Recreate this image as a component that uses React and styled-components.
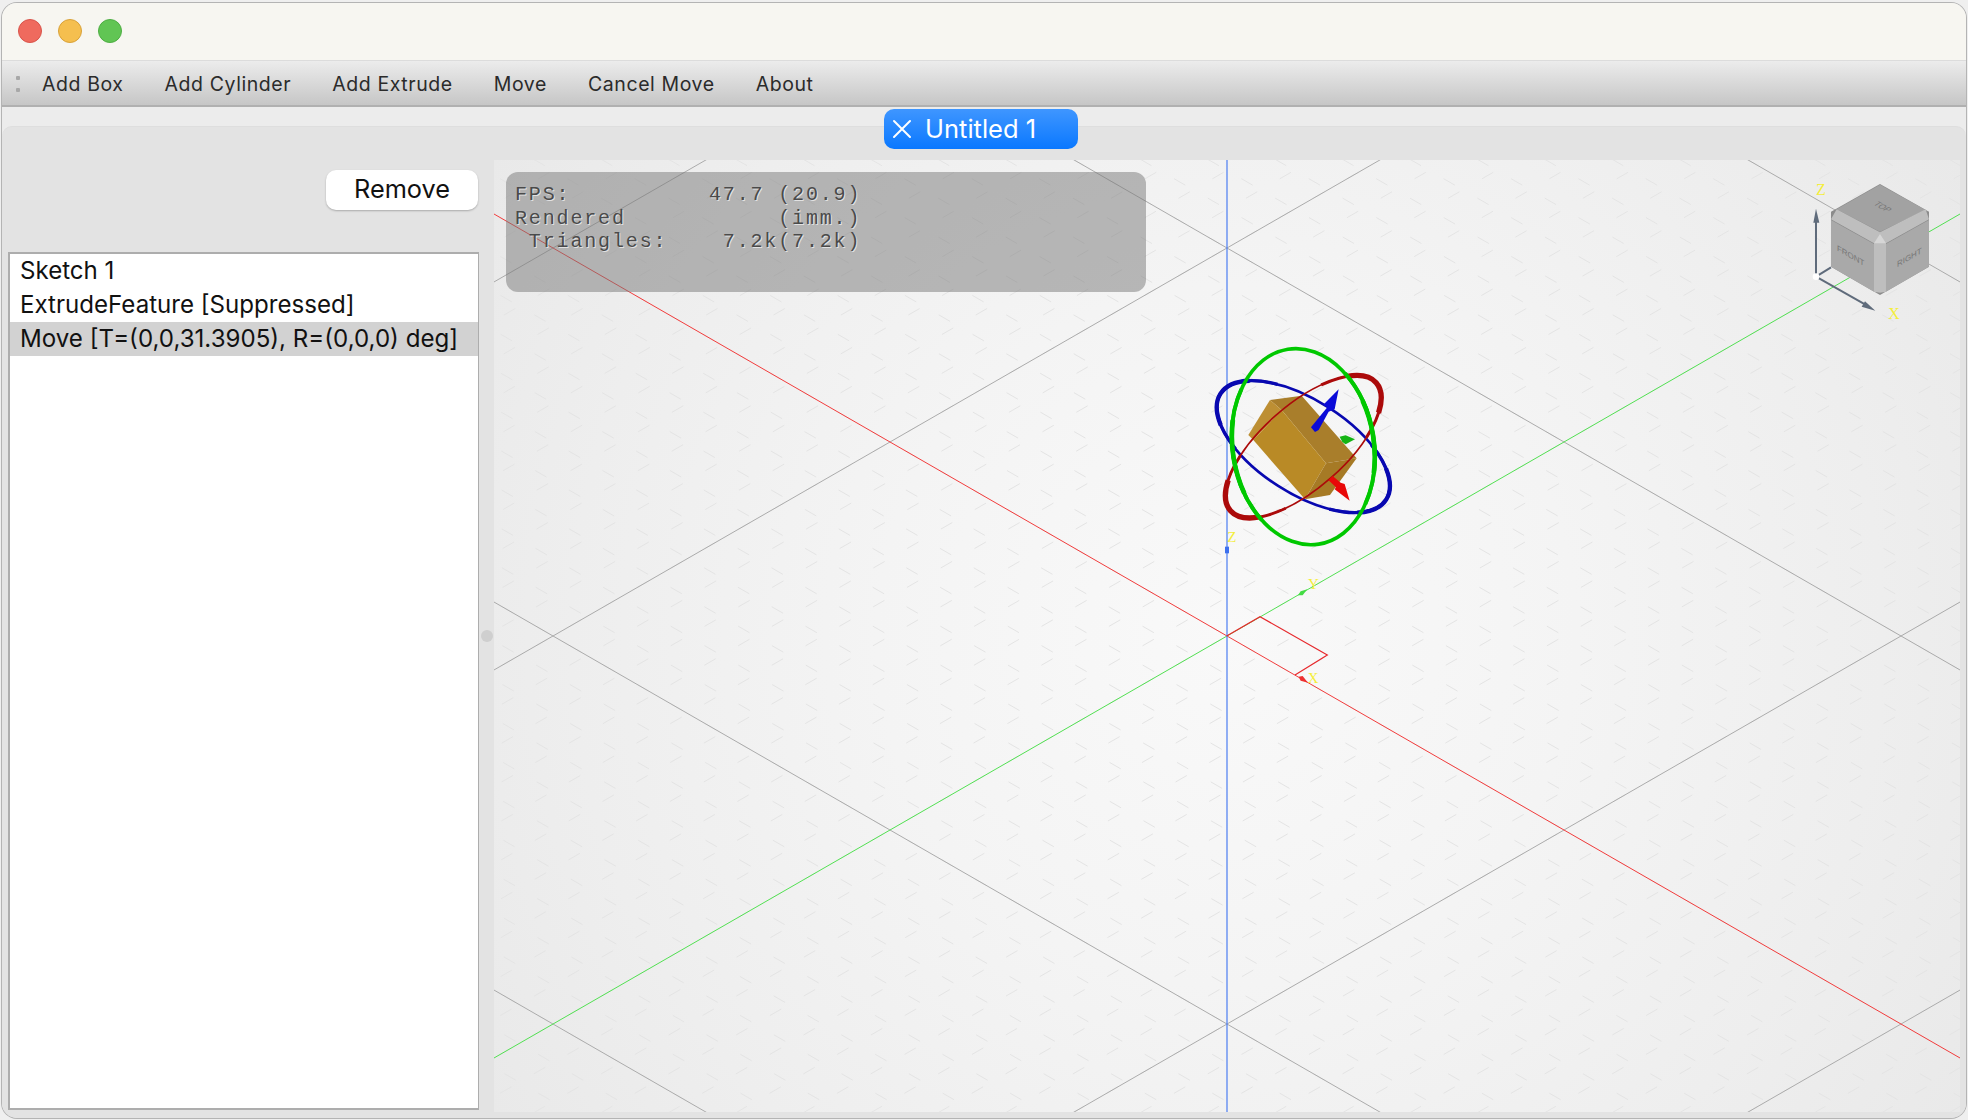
import React from 'react';
import styled, { createGlobalStyle } from 'styled-components';

const GlobalStyle = createGlobalStyle`
  body, html {
    margin: 0;
    padding: 0;
    width: 100%;
    height: 100%;
    background-color: #efefef;
    overflow: hidden;
    font-family: Inter, "Liberation Sans", sans-serif;
  }
`;

const Window = styled.div`
  box-sizing: border-box;
  position: relative;
  width: 1964px;
  height: 1115px;
  margin: 3px 2px 0;
  display: flex;
  flex-direction: column;
  border-radius: 15px;
  overflow: hidden;
  background-color: #ececec;
  box-shadow: 0 0 0 1px #b4b4b4;
`;

const TitleBar = styled.div`
  box-sizing: border-box;
  height: 58px;
  flex: none;
  display: flex;
  align-items: center;
  gap: 16px;
  padding: 0 0 1px 16px;
  background-color: #f7f6f1;
  border-bottom: 1px solid #dcdcdc;
`;

const Light = styled.span`
  box-sizing: border-box;
  width: 24px;
  height: 24px;
  border-radius: 50%;
  background-color: ${(p) => p.$color};
  border: 1px solid ${(p) => p.$edge};
`;

const Toolbar = styled.div`
  box-sizing: border-box;
  height: 46px;
  flex: none;
  display: flex;
  align-items: center;
  padding-top: 2px;
  background: linear-gradient(#ececec, #c6c6c6);
  border-bottom: 2px solid #b0b0b0;
`;

const Grip = styled.span`
  width: 4px;
  height: 16px;
  margin-left: 14px;
  margin-right: 22px;
  background:
    radial-gradient(circle, #a8a8a8 2px, transparent 2.5px) center top / 4px 4px no-repeat,
    radial-gradient(circle, #a8a8a8 2px, transparent 2.5px) center bottom / 4px 4px no-repeat;
`;

const ToolButton = styled.span`
  font-size: 19.5px;
  letter-spacing: 0.58px;
  color: #2b2b2b;
  margin-right: 41px;
  white-space: nowrap;
`;

const TabArea = styled.div`
  position: relative;
  flex: 1;
  min-height: 0;
  display: flex;
  flex-direction: column;
  padding-top: 19px;
`;

const Tab = styled.div`
  box-sizing: border-box;
  position: absolute;
  top: 2px;
  left: 882px;
  width: 194px;
  height: 40px;
  display: flex;
  align-items: center;
  gap: 13px;
  padding: 0 0 1px 8px;
  border-radius: 10px;
  color: #fff;
  font-size: 25.5px;
  background: linear-gradient(#3f96ff, #0a78ff);
`;

const Pane = styled.div`
  box-sizing: border-box;
  flex: 1;
  min-height: 0;
  display: flex;
  padding: 33px 6px 6px 0;
  border-top: 1px solid #dedede;
  border-radius: 10px 10px 0 0;
  background-color: #e3e3e3;
`;

const Sidebar = styled.div`
  box-sizing: border-box;
  width: 477px;
  flex: none;
  display: flex;
  flex-direction: column;
  align-items: flex-end;
  padding: 10px 0 2px 6px;
`;

const RemoveButton = styled.button`
  width: 152px;
  height: 40px;
  margin-right: 1px;
  padding: 0 0 3px;
  border: none;
  border-radius: 10px;
  background-color: #fff;
  box-shadow: 0 1px 2px rgba(0, 0, 0, 0.25);
  color: #111;
  font-family: inherit;
  font-size: 25.3px;
`;

const FeatureList = styled.div`
  box-sizing: border-box;
  width: 100%;
  flex: 1;
  margin-top: 42px;
  background-color: #fff;
  border: 2px solid #adadad;
  border-right-width: 1px;
`;

const FeatureRow = styled.div`
  height: 34px;
  line-height: 33px;
  padding-left: 10px;
  font-size: 24.1px;
  color: #111;
  white-space: nowrap;
  background-color: ${(p) => (p.$selected ? '#d2d2d2' : 'transparent')};
`;

const Splitter = styled.div`
  width: 15px;
  flex: none;
  display: flex;
  align-items: center;
  justify-content: center;
`;

const SplitterDot = styled.span`
  width: 12px;
  height: 12px;
  border-radius: 50%;
  background-color: #cfcfcf;
`;

const Viewport = styled.div`
  position: relative;
  width: 1466px;
  height: 952px;
  flex: none;
  overflow: hidden;
  background: radial-gradient(circle at 733px 476px, #f9f9f9 0%, #f4f4f4 40%, #eeeeee 75%, #e9e9e9 100%);
`;

const Scene = styled.svg`
  display: block;
`;

const Stats = styled.pre`
  box-sizing: border-box;
  position: absolute;
  top: 12px;
  left: 12px;
  width: 640px;
  height: 120px;
  margin: 0;
  padding: 11px 9px;
  border-radius: 12px;
  background-color: rgba(120, 120, 120, 0.5);
  font-family: "Liberation Mono", "DejaVu Sans Mono", monospace;
  font-size: 20px;
  line-height: 23.6px;
  letter-spacing: 1.85px;
  color: #4a4a4a;
  text-shadow: 1px 1px 0 #e2e2e2;
`;

const AxisLabel = styled.text`
  fill: #f4ee3c;
  font-family: "Liberation Serif", serif;
  font-size: ${(p) => p.$size || 15}px;
`;

const CubeLabel = styled.text`
  fill: #767676;
  font-family: "Liberation Sans", sans-serif;
  font-size: 24px;
  text-anchor: middle;
`;

const tools = ['Add Box', 'Add Cylinder', 'Add Extrude', 'Move', 'Cancel Move', 'About'];

const features = [
  { name: 'Sketch 1' },
  { name: 'ExtrudeFeature [Suppressed]' },
  { name: 'Move [T=(0,0,31.3905), R=(0,0,0) deg]', selected: true },
];

const statsText = `FPS:          47.7 (20.9)
Rendered           (imm.)
 Triangles:    7.2k(7.2k)`;

// scene is drawn in page coordinates, origin of the model at (1227, 636)
const OX = 1227;
const OY = 636;
const SLOPE = 0.5757;
const MAJOR = 674;
const MINOR = 67.4;

const range = (from, to) => Array.from({ length: to - from + 1 }, (_, i) => from + i);

const DiagLine = ({ x, dir, ...rest }) => (
  <line x1={x - 1200} y1={OY - dir * 1200 * SLOPE} x2={x + 1200} y2={OY + dir * 1200 * SLOPE} {...rest} />
);

const Grid = () => (
  <g>
    {range(-30, 45).map((k) => (
      <g key={k} stroke="#e4e4e4" strokeWidth="1" strokeDasharray="13 26">
        <DiagLine x={OX + k * MINOR} dir={1} />
        <DiagLine x={OX + k * MINOR} dir={-1} />
      </g>
    ))}
    {[-2, -1, 1, 2].map((k) => (
      <g key={k} stroke="#ababab" strokeWidth="1">
        <DiagLine x={OX + k * MAJOR} dir={1} />
        <DiagLine x={OX + k * MAJOR} dir={-1} />
      </g>
    ))}
    <DiagLine x={OX} dir={1} stroke="#f23c3c" strokeWidth="1" />
    <DiagLine x={OX} dir={-1} stroke="#52e052" strokeWidth="1" />
    <line x1={OX} y1="160" x2={OX} y2="1112" stroke="#4a7cf2" strokeWidth="1.2" />
  </g>
);

const OriginMarks = () => (
  <g transform="translate(1190 520) scale(0.3333)">
    <path d="M110 348 L210 290 L412 405 L315 465" fill="none" stroke="#e8282c" strokeWidth="3.6" />
    <rect x="105" y="80" width="12" height="20" fill="#3d70ee" />
    <path d="M324 226 L332 214 L352 208 L338 226 Z" fill="#44dc44" />
    <path d="M326 470 L338 468 L354 488 L332 482 Z" fill="#ee3030" />
    <AxisLabel $size={45} x="112" y="66">Z</AxisLabel>
    <AxisLabel $size={45} x="354" y="208">Y</AxisLabel>
    <AxisLabel $size={45} x="353" y="490">X</AxisLabel>
  </g>
);

// a ring is thin on its long sides and swells towards the two far ends
const Ring = ({ rx, ry, angle, color, widths }) => (
  <g transform={`translate(370 350) rotate(${angle})`} fill="none" stroke={color}>
    <ellipse rx={rx} ry={ry} strokeWidth={widths[0]} />
    <ellipse rx={rx} ry={ry} strokeWidth={widths[1]} pathLength="100" strokeDasharray="26 24" strokeDashoffset="13" />
    <ellipse rx={rx} ry={ry} strokeWidth={widths[2]} pathLength="100" strokeDasharray="14 36" strokeDashoffset="7" />
  </g>
);

const Gizmo = () => (
  <g transform="translate(1180 330) scale(0.3333)">
    <polygon points="270,210 365,197 530,385 438,400 305,240" fill="#a97e2b" />
    <polygon points="270,210 305,240 220,330 205,315" fill="#bd8f33" />
    <polygon points="305,240 220,330 375,508 438,400" fill="#b98a26" />
    <polygon points="438,400 530,385 450,495 375,508" fill="#a67a25" />
    <Ring rx={295} ry={140} angle={32.6} color="#0808b0" widths={[8, 10, 13]} />
    <Ring rx={291} ry={125} angle={-41.3} color="#ab0a0a" widths={[5, 9, 16]} />
    <Ring rx={212} ry={296} angle={-9} color="#00c800" widths={[11, 12, 14]} />
    <polygon points="393,292 405,306 416,300 446,245 464,238 476,178 430,224 442,232" fill="#0a0ad8" />
    <polygon points="445,450 458,438 482,458 494,462 509,512 464,478 468,472" fill="#e80808" />
    <polygon points="479,320 497,316 525,328 497,343 487,336" fill="#14b414" />
  </g>
);

const NavCube = () => (
  <g transform="translate(1780 160) scale(0.3333)">
    <polygon points="300,72 447,155 447,320 300,405 153,320 153,155" fill="#8c8c8c" />
    <polygon points="300,74 437,150 300,215 170,148" fill="#a2a2a2" />
    <polygon points="153,180 282,252 282,395 153,320" fill="#a9a9a9" />
    <polygon points="318,252 447,180 447,320 318,395" fill="#a9a9a9" />
    <polygon points="153,178 170,148 300,217 437,148 447,178 318,250 318,395 300,398 282,395 282,250" fill="#bebebe" />
    <polygon points="300,222 318,250 282,250" fill="#d6d6d6" />
    <g transform="translate(300 145) rotate(30) skewX(-30)">
      <CubeLabel>TOP</CubeLabel>
    </g>
    <g transform="translate(212 295) skewY(30)">
      <CubeLabel>FRONT</CubeLabel>
    </g>
    <g transform="translate(388 300) skewY(-30)">
      <CubeLabel>RIGHT</CubeLabel>
    </g>
    <g stroke="#5f6b7b" strokeWidth="6" fill="#5f6b7b">
      <line x1="108" y1="350" x2="153" y2="322" />
      <line x1="108" y1="350" x2="108" y2="170" />
      <line x1="108" y1="350" x2="255" y2="433" />
    </g>
    <polygon points="108,146 118,188 100,188" fill="#5f6b7b" />
    <polygon points="286,452 245,440 255,424" fill="#5f6b7b" />
    <circle cx="108" cy="350" r="10" fill="#fff" />
    <AxisLabel $size={48} x="108" y="106">Z</AxisLabel>
    <AxisLabel $size={48} x="325" y="476">X</AxisLabel>
  </g>
);

const CloseIcon = () => (
  <svg width="20" height="20" viewBox="0 0 20 20" fill="none" stroke="#fff" strokeWidth="2" strokeLinecap="round">
    <path d="M2 2 L18 18 M18 2 L2 18" />
  </svg>
);

const App = () => (
  <Window>
    <GlobalStyle />
    <TitleBar>
      <Light $color="#ef6a5e" $edge="#d9544b" />
      <Light $color="#f5bf4f" $edge="#d9a23a" />
      <Light $color="#61c554" $edge="#4eae43" />
    </TitleBar>
    <Toolbar>
      <Grip />
      {tools.map((t) => (
        <ToolButton key={t}>{t}</ToolButton>
      ))}
    </Toolbar>
    <TabArea>
      <Pane>
        <Sidebar>
          <RemoveButton>Remove</RemoveButton>
          <FeatureList>
            {features.map((f) => (
              <FeatureRow key={f.name} $selected={f.selected}>{f.name}</FeatureRow>
            ))}
          </FeatureList>
        </Sidebar>
        <Splitter>
          <SplitterDot />
        </Splitter>
        <Viewport>
          <Scene width="1466" height="952" viewBox="494 160 1466 952">
            <Grid />
            <OriginMarks />
            <Gizmo />
            <NavCube />
          </Scene>
          <Stats>{statsText}</Stats>
        </Viewport>
      </Pane>
      <Tab>
        <CloseIcon />
        <span>Untitled 1</span>
      </Tab>
    </TabArea>
  </Window>
);

export default App;
